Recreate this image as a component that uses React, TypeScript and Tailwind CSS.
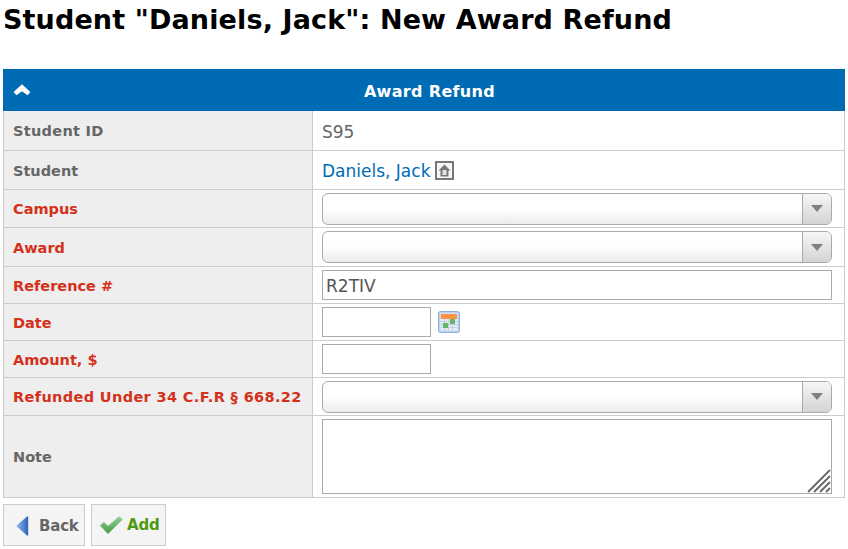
import React from "react";

const font = "font-['DejaVu_Sans',Verdana,sans-serif]";

function Row({ label, required, height, labelClass = "text-[14.5px]", children }: { label: string; required?: boolean; height: string; labelClass?: string; children: React.ReactNode }) {
  return (
    <div className={`flex border-b border-[#cccccc] ${height}`}>
      <div className={`w-[309px] shrink-0 flex items-center pl-[9px] pt-[3px] bg-[#eeeeee] border-r border-[#cccccc] font-bold ${labelClass} ${required ? "text-[#d4301a]" : "text-[#666666]"}`}>
        {label}
      </div>
      <div className="flex-1 flex items-center pl-[9px] pr-[12px] text-[17px] text-[#666666]">{children}</div>
    </div>
  );
}

function SelectBox() {
  return (
    <div className="w-full h-[32px] flex rounded-[6px] border border-[#aaaaaa] bg-gradient-to-b from-white from-50% to-[#ececec] overflow-hidden">
      <div className="flex-1" />
      <div className="w-[29px] flex items-center justify-center border-l border-[#aaaaaa] bg-gradient-to-b from-[#f6f6f6] to-[#d4d4d4]">
        <div className="w-0 h-0 border-x-[6px] border-x-transparent border-t-[7px] border-t-[#808080]" />
      </div>
    </div>
  );
}

function CalendarIcon() {
  return (
    <svg width="22" height="22" viewBox="0 0 22 22" className="ml-[7px]">
      <rect x="0.5" y="0.5" width="21" height="21" rx="2" fill="#bcd2ee" stroke="#8fb0da" />
      <rect x="2.5" y="2.5" width="17" height="17" fill="#e6edf6" />
      <rect x="3" y="3" width="16" height="5" fill="#fb9445" />
      <path d="M3 10.5h16M3 13.5h16M3 16.5h16M6.5 8v11M10.5 8v11M14.5 8v11" stroke="#c2cfe0" strokeWidth="1" />
      <rect x="5" y="12" width="5" height="5" fill="#66b566" />
      <rect x="12" y="8" width="5" height="5" fill="#66b566" />
    </svg>
  );
}

export default function App() {
  return (
    <div className={`${font} w-[848px] h-[549px] bg-white overflow-hidden`}>
      <h1 className="h-[69px] pl-[3px] pt-[2px] text-[27px] leading-[36px] font-bold tracking-[0.13px] text-black">Student "Daniels, Jack": New Award Refund</h1>

      <div className="mx-[3px] w-[842px]">
        <div className="relative h-[42px] bg-[#006bb5] flex items-center justify-center pl-[11px] pt-[4px] text-white text-[16px] font-bold tracking-[0.33px]">
          <svg width="18" height="12" viewBox="0 0 18 12" className="absolute left-[10px] top-[15px]">
            <path d="M1.5 8 9 1l7.5 7-2 2.500L9 6.500l-5.500 4z" fill="#fff" stroke="#fff" strokeWidth="1.2" />
          </svg>
          Award Refund
        </div>
        <div className="border-x border-[#cccccc]">
          <Row label="Student ID" height="h-[40px]" labelClass="text-[14.5px] tracking-[0.3px]"><span className="pt-[4px]">S95</span></Row>
          <Row label="Student" height="h-[39px]">
            <span className="pt-[4px] text-[#006bb5]">Daniels, Jack</span>
            <svg width="19" height="19" viewBox="0 0 19 19" className="ml-[5px] mt-[1px]">
              <rect x="1" y="1" width="17" height="17" fill="#f6f6f6" stroke="#777" strokeWidth="2" />
              <path d="M9.500 3.500 3.500 9.500H5.500V15.500h8V9.500h2z" fill="#777" />
              <rect x="7.500" y="9" width="4" height="5" fill="#e4e4e4" />
            </svg>
          </Row>
          <Row label="Campus" required height="h-[38px]"><SelectBox /></Row>
          <Row label="Award" required height="h-[39px]"><SelectBox /></Row>
          <Row label="Reference #" required height="h-[37px]">
            <input readOnly value="R2TIV" className="w-full h-[30px] border border-[#aaaaaa] px-[3px] pt-[2px] text-[17px] text-[#555555] outline-none" />
          </Row>
          <Row label="Date" required height="h-[37px]">
            <input readOnly className="w-[109px] h-[30px] border border-[#aaaaaa] outline-none" />
            <CalendarIcon />
          </Row>
          <Row label="Amount, $" required height="h-[37px]">
            <input readOnly className="w-[109px] h-[30px] border border-[#aaaaaa] outline-none" />
          </Row>
          <Row label="Refunded Under 34 C.F.R § 668.22" required height="h-[38px]" labelClass="text-[14.5px] tracking-[0.36px]"><SelectBox /></Row>
          <Row label="Note" height="h-[82px]">
            <div className="relative w-full h-[75px] border border-[#aaaaaa]">
              <svg width="24" height="24" viewBox="0 0 24 24" className="absolute right-0 bottom-0">
                <path d="M1 23 23 1M7 23 23 7M13 23 23 13M19 23l4-4" stroke="#666" strokeWidth="1.800" />
              </svg>
            </div>
          </Row>
        </div>

        <div className="flex gap-[6px] mt-[6px]">
          <button className="h-[42px] w-[82px] flex items-center bg-[#f4f4f4] border border-[#cccccc] pl-[11px] pt-[2px] text-[15px] font-bold text-[#666666] tracking-[-0.2px]">
            <svg width="14" height="24" viewBox="0 0 14 24" className="mr-[10px]">
              <defs>
                <linearGradient id="backFill" x1="0" y1="0" x2="1" y2="0">
                  <stop offset="0" stopColor="#8db4ec" />
                  <stop offset="1" stopColor="#2f62bd" />
                </linearGradient>
              </defs>
              <path d="M12 2.500c.5-.5 1.200-.2 1.200.5v18c0 .7-.7 1-1.200.5L2 12.800c-.5-.4-.5-1.200 0-1.600z" fill="url(#backFill)" />
            </svg>
            Back
          </button>
          <button className="h-[42px] w-[75px] flex items-center bg-[#f4f4f4] border border-[#cccccc] pl-[7px] text-[15px] font-bold text-[#4f9a0f] tracking-[-0.2px]">
            <svg width="24" height="20" viewBox="0 0 24 20" className="mr-[4px]">
              <defs>
                <linearGradient id="addFill" x1="0" y1="0" x2="0" y2="1">
                  <stop offset="0" stopColor="#8fd08f" />
                  <stop offset="1" stopColor="#469a46" />
                </linearGradient>
              </defs>
              <path d="M1 10.500l4-3.500 4 4L20 1.500l3.500 3L9 19z" fill="url(#addFill)" stroke="#a8d4a8" strokeWidth="0.8" />
            </svg>
            Add
          </button>
        </div>
      </div>
    </div>
  );
}
